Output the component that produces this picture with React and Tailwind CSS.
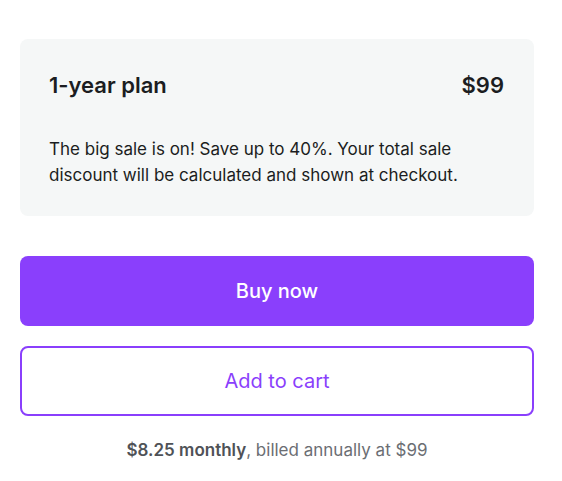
export default function App() {
  return (
    <div className="min-h-screen bg-white font-['Inter',sans-serif] pt-[39px]">
      <div className="w-[514px] ml-[20px]">
        <div className="rounded-lg bg-[#f5f7f7] pl-[29px] pr-[30px] pt-[32px] pb-[28px]">
          <div className="flex items-center justify-between text-[22px] leading-[28px] font-semibold text-[#1b1d21]">
            <span>1-year plan</span>
            <span>$99</span>
          </div>
          <p className="mt-[37px] max-w-[430px] text-[17px] leading-[26px] text-[#1b1d21]">
            The big sale is on! Save up to 40%. Your total sale discount will be calculated and shown at checkout.
          </p>
        </div>

        <button className="mt-[40px] flex h-[70px] w-full items-center justify-center rounded-lg bg-[#8a3ffc] text-[20px] font-medium text-white">
          Buy now
        </button>
        <button className="mt-[20px] flex h-[70px] w-full items-center justify-center rounded-lg border-2 border-[#8a3ffc] bg-white text-[20px] text-[#8a3ffc]">
          Add to cart
        </button>

        <p className="mt-[22px] text-center text-[17px] leading-[24px] text-[#6b6e73]">
          <span className="font-semibold text-[#4f5257]">$8.25 monthly</span>, billed annually at $99
        </p>
      </div>
    </div>
  );
}
